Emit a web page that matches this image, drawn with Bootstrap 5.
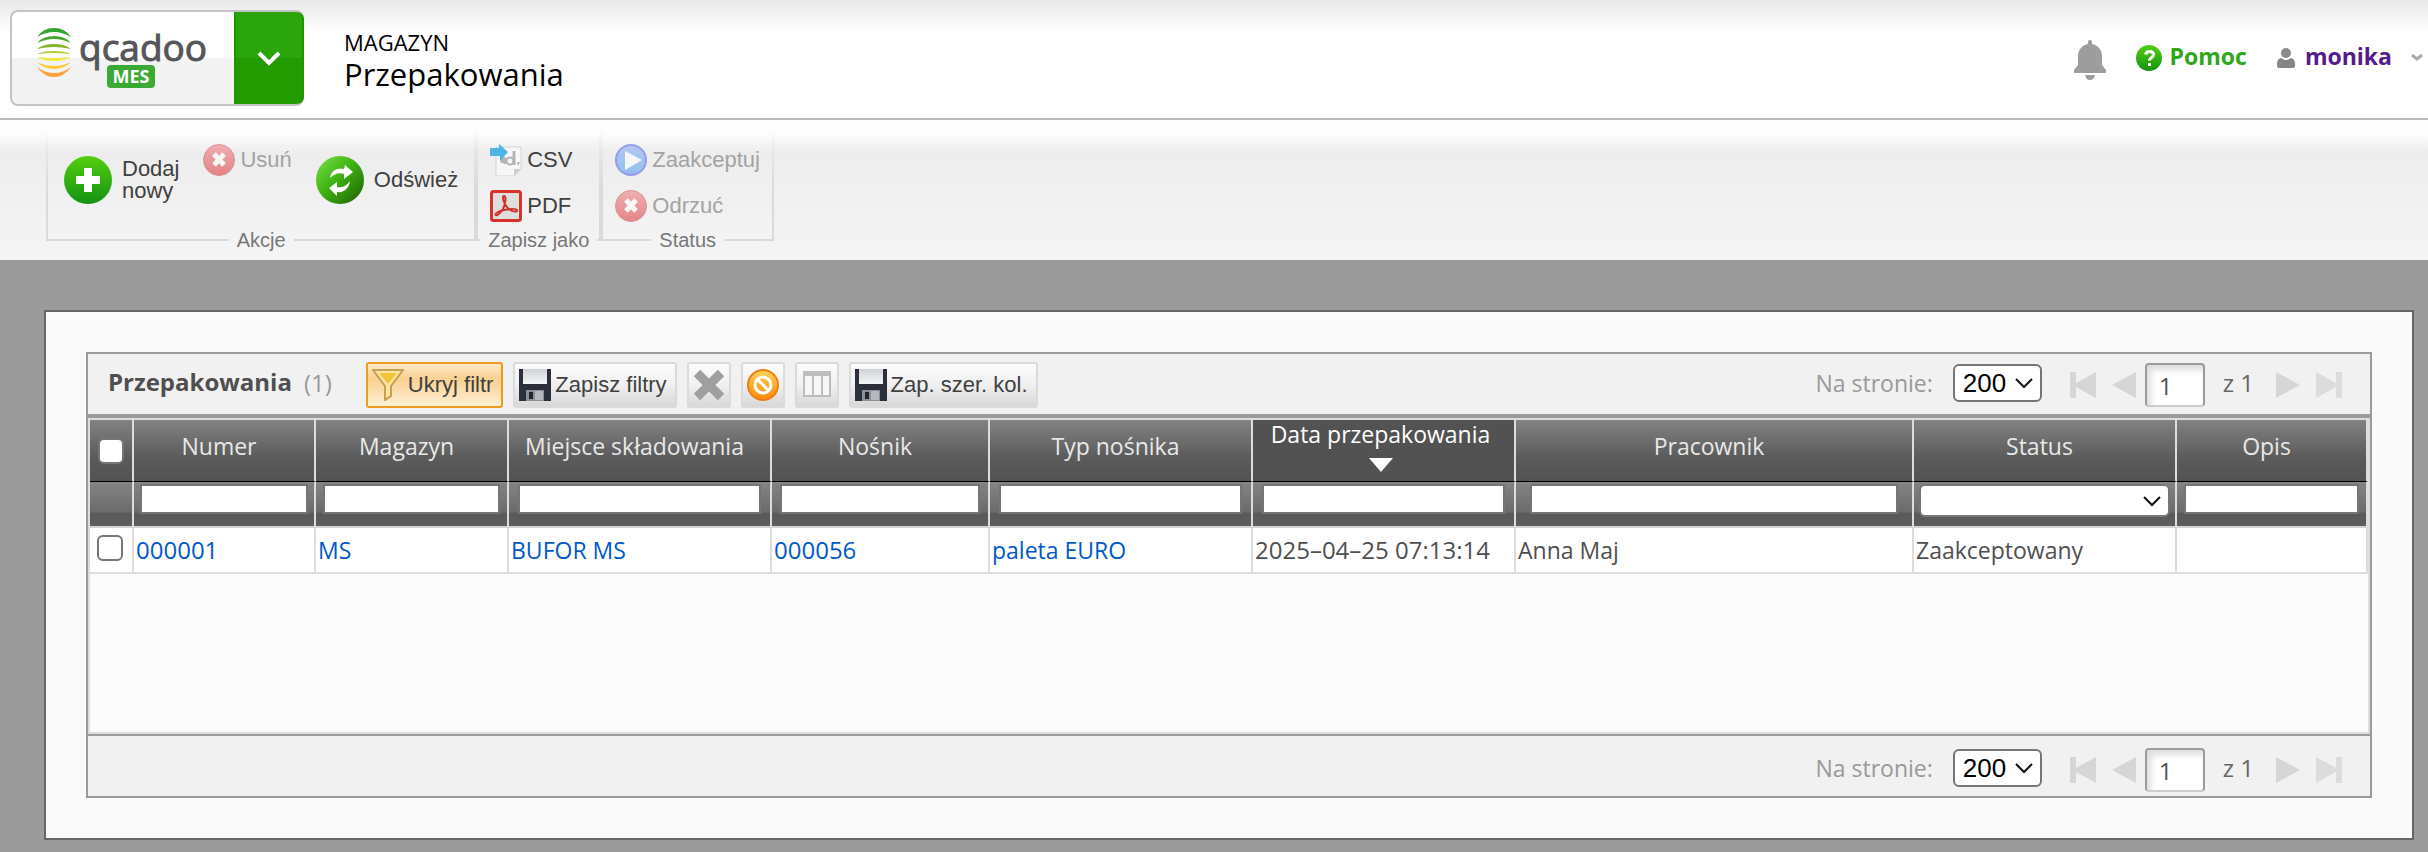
<!DOCTYPE html>
<html lang="pl">
<head>
<meta charset="utf-8">
<meta name="viewport" content="width=device-width, initial-scale=1">
<title>Przepakowania</title>
<link rel="stylesheet" href="https://cdn.jsdelivr.net/npm/bootstrap@5.3.0/dist/css/bootstrap.min.css">
<style>
  body { background: #9b9b9b; color: #4f4f4f; font-family: "Open Sans", "Noto Sans", sans-serif; font-size: 23px; line-height: 30px; }
  svg { display: block; flex: none; }
  button { background: none; border: 0; padding: 0; }
  .arial { font-family: "Liberation Sans", Arial, sans-serif; font-size: 22px; line-height: 22px; color: #404040; }

  /* top bar */
  .topbar { height: 120px; border-bottom: 2px solid #bbb; background: linear-gradient(#e7e7e7, #fff 32px); padding: 10px 0 12px 10px; }
  .logo-box { width: 294px; height: 96px; border: 2px solid #c4c4c4; border-right: 0; border-radius: 8px; background: linear-gradient(#fff 50%, #f2f2f2 50%); overflow: hidden; }
  .logo-toggle { width: 70px; margin: -2px 0; border: 2px solid #1f9400; border-radius: 0 8px 8px 0; background: linear-gradient(#2aa50c 50%, #229b01 50%); }
  .crumb { margin-left: 40px; padding-top: 17px; color: #000; }
  .crumb-top { font-size: 22px; line-height: 30px; }
  .crumb-main { font-size: 31px; line-height: 34px; }
  .user-links { font-weight: 700; font-size: 23px; padding-bottom: 4px; }
  .user-links a { text-decoration: none; }
  .help-link { color: #2fa71b; gap: 8px; margin-left: 30px; }
  .user-link { color: #551a8b; gap: 10px; margin-left: 30px; }

  /* ribbon */
  .ribbon { height: 140px; padding: 9px 0 8px 46px; background: linear-gradient(#fff, #fdfdfd 14px, #ededed 32px, #f5f5f5); }
  .ribbon-group { background: linear-gradient(#fff0, #dadada 60px) left top / 2px 111px no-repeat, linear-gradient(#fff0, #dadada 60px) right top / 2px 111px no-repeat; }
  .ribbon-items { height: 100px; padding: 0 14px 0 14px; }
  .ribbon-items.wide { padding: 2px 18px 0 18px; }
  .ribbon-col { padding-top: 15px; gap: 14px; }
  .wide .ribbon-col { padding-top: 13px; }
  .tool { display: flex; align-items: center; gap: 5px; }
  .tool.large { gap: 10px; text-align: left; }
  .tool:disabled { color: #a3a3a3; }
  .tool:disabled svg { opacity: .5; }
  .legend-row { display: flex; align-items: center; font-family: "Liberation Sans", Arial, sans-serif; font-size: 20px; line-height: 22px; color: #777; }
  .legend-row::before, .legend-row::after { content: ""; flex: 1 0 4px; height: 2px; background: #dadada; }
  .legend-row span { padding: 0 8px; }

  /* content */
  .content { padding: 50px 14px 12px 44px; }
  .window { background: #fafafa; border: 2px solid #666; padding: 40px; }
  .grid-box { border: 2px solid #9b9b9b; background: #fbfbfb; }
  .bar { background: #f1f1f1; padding: 0 28px 0 20px; }
  .bar-top { height: 64px; padding-top: 2px; border-bottom: 4px solid #9b9b9b; }
  .bar-bottom { height: 62px; padding-top: 8px; border-top: 2px solid #9b9b9b; }
  .grid-title { font-size: 24px; font-weight: 700; color: #4f4f4f; margin: 0 12px 5px 0; }
  .grid-count { font-size: 24px; color: #999; margin: 0 34px 5px 0; }
  .grid-btn { display: flex; align-items: center; gap: 4px; height: 46px; margin-right: 10px; padding: 0 8px 0 4px; border: 2px solid #dadada; border-radius: 3px; background: linear-gradient(#fcfcfc, #f0f0f0 50%, #d8d8d8); white-space: nowrap; }
  .grid-btn.square { padding: 0 4px; }
  .grid-btn.pressed { border-color: #f29a1f; background: linear-gradient(#fdebca, #f9d090 35%, #fef0d4); }
  .pager-label { color: #999; margin-right: 20px; padding-bottom: 4px; }
  .pager-total { color: #666; font-size: 24px; padding: 0 0 4px; margin: 0 22px 0 18px; white-space: nowrap; }
  .form-select { border: 2px solid #767676; border-radius: 6px; color: #000; background-color: #fff; background-image: url("data:image/svg+xml,%3Csvg xmlns='http://www.w3.org/2000/svg' viewBox='0 0 18 12'%3E%3Cpath d='M1 2l8 8 8-8' fill='none' stroke='%23111' stroke-width='2'/%3E%3C/svg%3E"); background-size: 18px 12px; background-position: right 7px center; }
  .per-page { width: 89px; height: 38px; margin: 0 28px 5px 0; padding: 0 28px 0 8px; font-family: "Liberation Sans", Arial, sans-serif; font-size: 26px; line-height: 32px; }
  .page-no { width: 60px; height: 44px; margin-left: 9px; padding: 4px 12px; border: 2px solid #9b9b9b; border-bottom-color: #ccc; border-radius: 4px; background: #fff; color: #4f4f4f; font-size: 24px; box-shadow: inset 4px 5px 6px #ddd; }

  /* grid */
  .grid-body { min-height: 316px; border: 2px solid #ddd; }
  .grid { width: 100%; table-layout: fixed; border-collapse: separate; border-spacing: 0; }
  .grid th, .grid td { border-right: 2px solid #ddd; }
  .heads th { height: 62px; padding: 0 10px 9px 0; border-bottom: 1px solid #000; background: linear-gradient(#828282, #5c5c5c 60%, #525252); color: #e8e8e8; font-weight: 400; text-align: center; white-space: nowrap; }
  .heads th.check-head { padding: 0; }
  .heads th.sorted { background: #525252; color: #fff; padding: 0 6px 0 0; line-height: 28px; vertical-align: top; }
  .sorted svg { margin: 10px auto 0; }
  .filters th { height: 46px; padding: 2px 0 0; border-bottom: 2px solid #d4d4d4; background: linear-gradient(#848484, #6b6b6b 68%, #595959 72%, #5e5e5e); text-align: center; vertical-align: top; }
  .filters input { display: block; width: 93%; height: 30px; margin: 0 auto; border: 2px solid #757575; background: #fff; }
  .filters .form-select { width: 96%; height: 33px; margin: 0 auto; padding: 0; }
  .grid td { height: 46px; padding: 0 2px; background: #fff; border-bottom: 2px solid #ddd; white-space: nowrap; }
  .grid .digits { font-size: 24px; }
  .grid a { color: #0059c9; text-decoration: none; }
  .form-check-input { display: block; width: 26px; height: 26px; margin: 0 auto; border: 2px solid #767676; border-radius: 5px; background-color: #fff; }
  td .form-check-input { margin: 0 0 4px 5px; }
</style>
</head>
<body>

<svg width="0" height="0" class="position-absolute" aria-hidden="true">
  <defs>
    <linearGradient id="green" x1="0" y1="0" x2="0" y2="1"><stop offset="0" stop-color="#55cf10"/><stop offset="1" stop-color="#129212"/></linearGradient>
    <linearGradient id="green2" x1="0" y1="0" x2="1" y2="1"><stop offset="0" stop-color="#7be04e"/><stop offset=".45" stop-color="#3fb412"/><stop offset="1" stop-color="#1c5c02"/></linearGradient>
    <linearGradient id="red" x1="0" y1="0" x2="0" y2="1"><stop offset="0" stop-color="#f0707a"/><stop offset="1" stop-color="#d81a1e"/></linearGradient>
    <linearGradient id="blue" x1="0" y1="0" x2="0" y2="1"><stop offset="0" stop-color="#7f9cf5"/><stop offset=".8" stop-color="#3f9df0"/><stop offset="1" stop-color="#4f6cf0"/></linearGradient>
    <linearGradient id="orange" x1="0" y1="0" x2="0" y2="1"><stop offset="0" stop-color="#ffd257"/><stop offset="1" stop-color="#f98a0c"/></linearGradient>
    <linearGradient id="metal" x1="0" y1="0" x2="0" y2="1"><stop offset="0" stop-color="#cfd2d6"/><stop offset="1" stop-color="#f6f7f8"/></linearGradient>
    <symbol id="i-x" viewBox="0 0 32 32"><circle cx="16" cy="16" r="15.5" fill="url(#red)" stroke="#c43a3a"/><path d="M11 10l10 11M21 10l-10 11" stroke="#fff" stroke-width="5"/></symbol>
    <symbol id="i-disk" viewBox="0 0 32 32"><path d="M0 0h32v32H0z" fill="#2b303c"/><path d="M4 0h24v15H4z" fill="url(#metal)"/><path d="M7 21h18v11H7z" fill="#8b8f96"/><path d="M16 22h8v9h-8z" fill="#b5b8bd"/><path d="M10 23h4v7h-4z" fill="#20242e"/></symbol>
    <symbol id="i-first" viewBox="0 0 26 26"><path d="M0 0h6v11L26 0v26L6 15v11H0z" fill="#d6d6d6"/></symbol>
    <symbol id="i-prev" viewBox="0 0 24 26"><path d="M24 0v26L0 13z" fill="#d6d6d6"/></symbol>
  </defs>
</svg>

<header class="topbar d-flex">
  <div class="logo-box d-flex">
    <svg class="flex-grow-1" width="222" height="92" viewBox="0 0 222 92" role="img" aria-label="qcadoo MES">
      <path d="M25 25Q31 16 42 16T59 25Q50 20 42 20T25 25z" fill="#33a532"/>
      <path d="M25 31Q31 24 42 24T59 31Q50 27 42 27T25 31z" fill="#45a82c"/>
      <path d="M25 37Q31 32 42 32T59 37Q50 35 42 35T25 37z" fill="#86b52a"/>
      <path d="M25 42Q31 39 42 39T59 42Q50 41 42 41T25 42z" fill="#b4cc2c"/>
      <path d="M25 45Q33 46 42 46T59 45Q52 49 42 49T25 45z" fill="#ece93a"/>
      <path d="M25 50Q33 54 42 54T59 50Q52 57 42 57T25 50z" fill="#fdc92d"/>
      <path d="M25 55Q33 61 42 61T59 55Q52 65 42 65T25 55z" fill="#f9a23a"/>
      <text x="67" y="49" font-family="Open Sans, sans-serif" font-size="37" fill="#55565a" stroke="#55565a">qcadoo</text>
      <rect x="95" y="53" width="48" height="23" rx="4" fill="#3aaa35"/>
      <text x="119" y="71" text-anchor="middle" font-family="Open Sans, sans-serif" font-weight="700" font-size="18" fill="#fff">MES</text>
    </svg>
    <button class="logo-toggle d-flex align-items-center justify-content-center" type="button" aria-label="Menu">
      <svg width="24" height="16" viewBox="0 0 24 16"><path d="M2 3l10 10L22 3" fill="none" stroke="#fff" stroke-width="4"/></svg>
    </button>
  </div>
  <div class="crumb">
    <div class="crumb-top">MAGAZYN</div>
    <div class="crumb-main">Przepakowania</div>
  </div>
  <div class="user-links d-flex align-items-center ms-auto">
    <svg class="mt-2" width="32" height="40" viewBox="0 0 32 40" role="img" aria-label="Powiadomienia"><path d="M16 0q2 0 2 2v2c6 1 10 6 10 12v9l4 5q1 3-1 3H1q-2 0-1-3l4-5v-9C4 10 8 5 14 4V2q0-2 2-2zM11 35h10q-1 5-5 5t-5-5z" fill="#9d9d9d"/></svg>
    <a class="help-link d-flex align-items-center" href="#">
      <svg class="mt-1" width="26" height="26" viewBox="0 0 26 26"><circle cx="13" cy="13" r="13" fill="url(#green)"/><path d="M9.500 9.500q1-3 4-3 4 0 4 3 0 2-2.500 3.500-1.500 1-1.500 2.500M13.500 18v3" fill="none" stroke="#fff" stroke-width="3"/></svg>
      Pomoc</a>
    <a class="user-link d-flex align-items-center" href="#">
      <svg class="mt-1" width="18" height="20" viewBox="0 0 18 20"><circle cx="9" cy="5" r="5" fill="#8a8a8a"/><path d="M4 10q5 4 10 0 4 1 4 6v2q0 2-2 2H2q-2 0-2-2v-2q0-5 4-6z" fill="#868686"/></svg>
      monika
      <svg class="ms-2 me-1 mt-1" width="14" height="8" viewBox="0 0 14 8"><path d="M2 1l5 4 5-4" fill="none" stroke="#aaa" stroke-width="3"/></svg></a>
  </div>
</header>

<nav class="ribbon d-flex" aria-label="Akcje">
  <div class="ribbon-group">
    <div class="ribbon-items wide d-flex gap-4">
      <button class="tool large arial" type="button">
        <svg width="48" height="48" viewBox="0 0 48 48"><circle cx="24" cy="24" r="24" fill="url(#green)"/><path d="M20 12h8v8h8v8h-8v8h-8v-8h-8v-8h8z" fill="#fff"/></svg>
        <span>Dodaj<br>nowy</span></button>
      <div class="ribbon-col">
        <button class="tool arial" type="button" disabled><svg width="32" height="32"><use href="#i-x"/></svg>Usuń</button>
      </div>
      <button class="tool large arial" type="button">
        <svg width="48" height="48" viewBox="0 0 48 48"><circle cx="24" cy="24" r="24" fill="url(#green2)"/><path d="M14 22c1-7 7-11 14-9l1-4 8 7-9 7v-5c-6-2-9 0-14 4zM34 25c-1 8-7 12-13 11v4l-8-8 8-6v5c6 1 9-1 13-6z" fill="#fff"/></svg>
        Odśwież</button>
    </div>
    <div class="legend-row"><span>Akcje</span></div>
  </div>
  <div class="ribbon-group">
    <div class="ribbon-items">
      <div class="ribbon-col d-flex flex-column">
        <button class="tool arial" type="button">
          <svg width="32" height="32" viewBox="0 0 32 32"><path d="M6 3h25v22l-7 7H6z" fill="#f7f7f7" stroke="#d4d4d4"/><path d="M31 25h-7v7z" fill="#d0d0d0"/><path d="M24 7v14M12 19v-4q1-2 3 0v5" fill="none" stroke="#b5b5b5" stroke-width="3"/><circle cx="20" cy="17" r="3.500" fill="none" stroke="#b5b5b5" stroke-width="2"/><path d="M27 18h3l-2 4z" fill="#b5b5b5"/><path d="M0 4h9V0l9 8-8 9v-5H0z" fill="#4db5e8"/></svg>
          CSV</button>
        <button class="tool arial" type="button">
          <svg width="32" height="32" viewBox="0 0 32 32"><rect x="1.500" y="1.500" width="29" height="29" rx="2" fill="#dededc" stroke="#d8322c" stroke-width="3"/><path d="M14 6c3 0 1 9-1 13-2 3-5 7-7 6s3-4 8-5 12-2 13 0-4 2-7 0-7-8-7-12q0-2 1-2z" fill="none" stroke="#d0302c" stroke-width="2"/></svg>
          PDF</button>
      </div>
    </div>
    <div class="legend-row"><span>Zapisz jako</span></div>
  </div>
  <div class="ribbon-group">
    <div class="ribbon-items">
      <div class="ribbon-col d-flex flex-column">
        <button class="tool arial" type="button" disabled><svg width="32" height="32" viewBox="0 0 32 32"><circle cx="16" cy="16" r="15" fill="url(#blue)" stroke="#3c50e0" stroke-width="2"/><path d="M10 7l17 9-17 10z" fill="#fff"/></svg>Zaakceptuj</button>
        <button class="tool arial" type="button" disabled><svg width="32" height="32"><use href="#i-x"/></svg>Odrzuć</button>
      </div>
    </div>
    <div class="legend-row"><span>Status</span></div>
  </div>
</nav>

<main class="content">
  <section class="window">
    <div class="grid-box">
      <div class="bar bar-top d-flex align-items-center">
        <h1 class="grid-title">Przepakowania</h1>
        <span class="grid-count">(1)</span>
        <button class="grid-btn pressed arial" type="button"><svg width="32" height="32" viewBox="0 0 32 32"><path d="M1 1h30L19 17v10l-6 4V17z" fill="#fbe3a0" stroke="#c9a050" stroke-width="2"/><path d="M7 4h18l-9 11z" fill="#f4c33c"/></svg>Ukryj filtr</button>
        <button class="grid-btn arial" type="button"><svg width="32" height="32"><use href="#i-disk"/></svg>Zapisz filtry</button>
        <button class="grid-btn square" type="button" aria-label="Wyczyść filtr"><svg width="32" height="32" viewBox="0 0 32 32"><path d="M4 4l24 24M28 4L4 28" stroke="#9f9f9f" stroke-width="9"/></svg></button>
        <button class="grid-btn square" type="button" aria-label="Wyczyść filtry zapisane"><svg width="32" height="32" viewBox="0 0 32 32"><circle cx="16" cy="16" r="15" fill="url(#orange)" stroke="#ee7d12" stroke-width="2"/><circle cx="16" cy="16" r="8" fill="none" stroke="#fff" stroke-width="3"/><path d="M11 11l10 10" stroke="#fff" stroke-width="3"/></svg></button>
        <button class="grid-btn square" type="button" aria-label="Kolumny"><svg width="32" height="32" viewBox="0 0 32 32"><path d="M2 2h28v26H2z" fill="#bdbdbd"/><path d="M4 7h7v19H4zM13 7h7v19h-7zM22 7h6v19h-6z" fill="#f7f7f7"/></svg></button>
        <button class="grid-btn arial" type="button"><svg width="32" height="32"><use href="#i-disk"/></svg>Zap. szer. kol.</button>

        <div class="d-flex align-items-center ms-auto">
          <label class="pager-label" for="perTop">Na stronie:</label>
          <select class="form-select per-page" id="perTop"><option>200</option></select>
          <button type="button" aria-label="Pierwsza"><svg width="26" height="26"><use href="#i-first"/></svg></button>
          <button class="ms-3" type="button" aria-label="Poprzednia"><svg width="24" height="26"><use href="#i-prev"/></svg></button>
          <input class="page-no" type="text" value="1" aria-label="Strona">
          <span class="pager-total">z 1</span>
          <button type="button" aria-label="Następna"><svg width="24" height="26" viewBox="0 0 24 26"><path d="M0 0v26l24-13z" fill="#d6d6d6"/></svg></button>
          <button class="ms-3" type="button" aria-label="Ostatnia"><svg width="26" height="26" viewBox="0 0 26 26"><path d="M26 0h-6v11L0 0v26l20-11v11h6z" fill="#dcdcdc"/></svg></button>
        </div>
      </div>

      <div class="grid-body">
        <table class="grid">
          <colgroup><col style="width:44px"><col style="width:182px"><col style="width:193px"><col style="width:263px"><col style="width:218px"><col style="width:263px"><col style="width:263px"><col style="width:398px"><col style="width:263px"><col style="width:191px"></colgroup>
          <thead>
            <tr class="heads">
              <th class="check-head"><input class="form-check-input" type="checkbox" aria-label="Zaznacz wszystkie"></th>
              <th>Numer</th><th>Magazyn</th><th>Miejsce składowania</th><th>Nośnik</th><th>Typ nośnika</th>
              <th class="sorted" aria-sort="descending">Data przepakowania<svg width="24" height="14" viewBox="0 0 24 14"><path d="M0 0h24L12 14z" fill="#fff"/></svg></th>
              <th>Pracownik</th><th>Status</th><th>Opis</th>
            </tr>
            <tr class="filters">
              <th></th>
              <th><input type="text" aria-label="Numer"></th>
              <th><input type="text" aria-label="Magazyn"></th>
              <th><input type="text" aria-label="Miejsce składowania"></th>
              <th><input type="text" aria-label="Nośnik"></th>
              <th><input type="text" aria-label="Typ nośnika"></th>
              <th><input type="text" aria-label="Data przepakowania"></th>
              <th><input type="text" aria-label="Pracownik"></th>
              <th><select class="form-select" aria-label="Status"><option></option></select></th>
              <th><input type="text" aria-label="Opis"></th>
            </tr>
          </thead>
          <tbody>
            <tr>
              <td><input class="form-check-input" type="checkbox" aria-label="Zaznacz 000001"></td>
              <td class="digits"><a href="#">000001</a></td><td><a href="#">MS</a></td><td><a href="#">BUFOR MS</a></td><td class="digits"><a href="#">000056</a></td><td><a href="#">paleta EURO</a></td>
              <td class="digits">2025–04–25 07:13:14</td><td>Anna Maj</td><td>Zaakceptowany</td><td></td>
            </tr>
          </tbody>
        </table>
      </div>

      <div class="bar bar-bottom d-flex align-items-center">
        <div class="d-flex align-items-center ms-auto">
          <label class="pager-label" for="perBottom">Na stronie:</label>
          <select class="form-select per-page" id="perBottom"><option>200</option></select>
          <button type="button" aria-label="Pierwsza"><svg width="26" height="26"><use href="#i-first"/></svg></button>
          <button class="ms-3" type="button" aria-label="Poprzednia"><svg width="24" height="26"><use href="#i-prev"/></svg></button>
          <input class="page-no" type="text" value="1" aria-label="Strona">
          <span class="pager-total">z 1</span>
          <button type="button" aria-label="Następna"><svg width="24" height="26" viewBox="0 0 24 26"><path d="M0 0v26l24-13z" fill="#d6d6d6"/></svg></button>
          <button class="ms-3" type="button" aria-label="Ostatnia"><svg width="26" height="26" viewBox="0 0 26 26"><path d="M26 0h-6v11L0 0v26l20-11v11h6z" fill="#dcdcdc"/></svg></button>
        </div>
      </div>
    </div>
  </section>
</main>

<script src="https://cdn.jsdelivr.net/npm/bootstrap@5.3.0/dist/js/bootstrap.bundle.min.js"></script>
</body>
</html>
